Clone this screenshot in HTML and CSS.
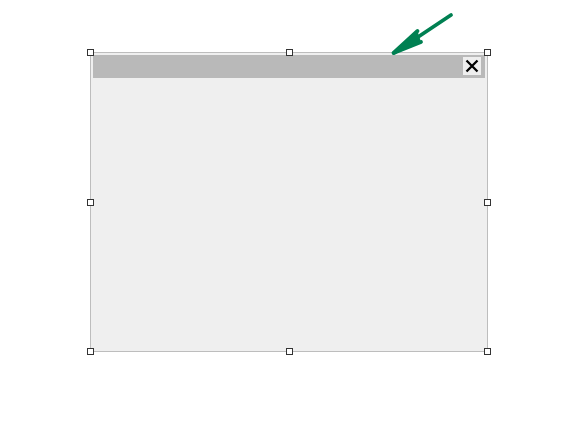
FILE: index.html
```html
<!DOCTYPE html>
<html>
<head>
<meta charset="utf-8">
<link rel="stylesheet" href="styles.css">
</head>
<body>
<div class="canvas">
  <div class="window">
    <div class="titlebar">
      <button class="close" aria-label="Close">
        <svg width="18" height="18" viewBox="0 0 18 18"><path d="M3.5 3.5 L14.5 14.5 M14.5 3.5 L3.5 14.5" stroke="#000" stroke-width="2.3" stroke-linecap="butt" fill="none"/></svg>
      </button>
    </div>
    <div class="content"></div>
    <span class="handle h-tl"></span>
    <span class="handle h-tc"></span>
    <span class="handle h-tr"></span>
    <span class="handle h-ml"></span>
    <span class="handle h-mr"></span>
    <span class="handle h-bl"></span>
    <span class="handle h-bc"></span>
    <span class="handle h-br"></span>
  </div>
  <svg class="arrow" width="578" height="80" viewBox="0 0 578 80">
    <path d="M451 15 L394 53" stroke="#008052" stroke-width="3.8" stroke-linecap="round" fill="none"/>
    <path d="M417.5 31 L393.5 53 L421 42" stroke="#008052" stroke-width="3.8" stroke-linecap="round" stroke-linejoin="round" fill="#008052"/>
  </svg>
</div>
</body>
</html>
```

FILE: styles.css
```css
html, body {
  margin: 0;
  padding: 0;
  background: #ffffff;
  font-family: "Liberation Sans", Arial, sans-serif;
}
.canvas {
  position: relative;
  width: 578px;
  height: 422px;
  padding: 52px 0 0 90px;
  box-sizing: border-box;
}
.window {
  position: relative;
  width: 398px;
  height: 300px;
  box-sizing: border-box;
  border: 1px solid #bdbdbd;
  background: #efefef;
  padding: 2px 2px 0 2px;
  display: flex;
  flex-direction: column;
}
.titlebar {
  height: 23px;
  background: #b9b9b9;
  display: flex;
  justify-content: flex-end;
  align-items: flex-start;
  padding: 2px 4px 0 0;
  box-sizing: border-box;
}
.close {
  width: 18px;
  height: 18px;
  padding: 0;
  margin: 0;
  border: none;
  background: #eeeeee;
  display: flex;
  align-items: center;
  justify-content: center;
}
.close svg { display: block; }
.content {
  flex: 1;
}
.handle {
  position: absolute;
  width: 7px;
  height: 7px;
  box-sizing: border-box;
  border: 1px solid #333333;
  background: #ffffff;
}
.h-tl { left: -4px; top: -4px; }
.h-tc { left: 195px; top: -4px; }
.h-tr { right: -4px; top: -4px; }
.h-ml { left: -4px; top: 146px; }
.h-mr { right: -4px; top: 146px; }
.h-bl { left: -4px; bottom: -4px; }
.h-bc { left: 195px; bottom: -4px; }
.h-br { right: -4px; bottom: -4px; }
.arrow {
  position: absolute;
  left: 0;
  top: 0;
  pointer-events: none;
}
```
